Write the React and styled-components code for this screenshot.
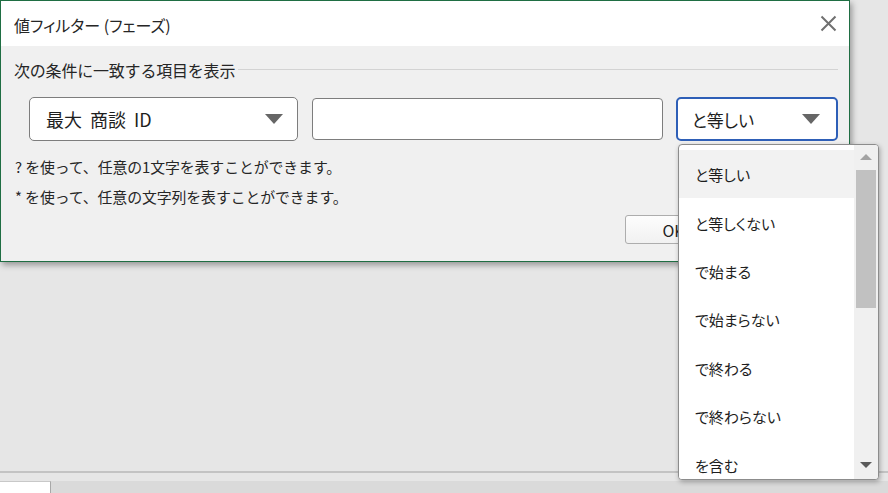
import React from 'react';
import styled, { createGlobalStyle } from 'styled-components';

const GlobalStyle = createGlobalStyle`
	html, body {
		margin: 0;
		padding: 0;
		background: #e6e6e6;
		font-family: 'Noto Sans CJK JP', 'Noto Sans', sans-serif;
		color: #222;
	}
`;

const Page = styled.div`
	position: relative;
	width: 888px;
	height: 493px;
	overflow: hidden;
	display: flex;
	flex-direction: column;
`;

const Workspace = styled.div`
	flex: 1;
	border-bottom: 2px solid #c3c3c3;
`;

const Spacer = styled.div`
	height: 8px;
	background: #e6e6e6;
`;

const TabBar = styled.div`
	height: 12px;
	background: #dadada;
	display: flex;
`;

const SheetTab = styled.div`
	width: 50px;
	background: #fff;
	border-right: 1px solid #a8a8a8;
	border-top: 1px solid #c8c8c8;
`;

const Dialog = styled.div`
	width: 848px;
	height: 260px;
	border: 1px solid #1f6e43;
	background: #f0f0f0;
	box-shadow: 2px 3px 6px rgba(0, 0, 0, 0.35);
	display: flex;
	flex-direction: column;
`;

const TitleBar = styled.div`
	height: 45px;
	background: #fff;
	display: flex;
	align-items: center;
	justify-content: space-between;
	padding: 0 12px 0 13px;
`;

const Title = styled.span`
	font-size: 16px;
	font-feature-settings: 'palt';
	color: #262626;
	padding-top: 2px;
`;

const CloseButton = styled.button`
	border: none;
	background: transparent;
	padding: 0;
	width: 18px;
	height: 18px;
	display: flex;
	align-items: center;
	justify-content: center;
`;

const Body = styled.div`
	flex: 1;
	padding: 12px 11px 0 13px;
	display: flex;
	flex-direction: column;
`;

const GroupHeader = styled.div`
	display: flex;
	align-items: center;
	gap: 3px;
	height: 24px;
`;

const GroupLabel = styled.span`
	font-size: 16px;
	color: #262626;
	white-space: nowrap;
	letter-spacing: -0.2px;
`;

const GroupLine = styled.div`
	flex: 1;
	height: 1px;
	background: #d3d3d3;
	margin-top: -1px;
`;

const ConditionRow = styled.div`
	display: flex;
	align-items: center;
	gap: 14px;
	margin: 15px 0 0 15px;
`;

const Select = styled.div`
	box-sizing: border-box;
	width: ${(p) => p.$width}px;
	height: 44px;
	background: #fff;
	border: ${(p) => (p.$focused ? '2px solid #2e5fb7' : '1px solid #7d7d7d')};
	border-radius: 5px;
	display: flex;
	align-items: center;
	justify-content: space-between;
	padding: ${(p) => (p.$focused ? '0 16px 0 14px' : '0 14px 0 16px')};
	font-size: ${(p) => p.$size}px;
	color: #1e1e1e;
	font-feature-settings: 'palt';
	word-spacing: ${(p) => p.$wordGap || 0}px;
`;

const Caret = styled.span`
	width: 0;
	height: 0;
	border-left: 9px solid transparent;
	border-right: 9px solid transparent;
	border-top: 10px solid #666;
`;

const TextInput = styled.div`
	box-sizing: border-box;
	width: 353px;
	height: 42px;
	background: #fff;
	border: 1px solid #7d7d7d;
	border-radius: 4px;
	margin-right: -1px;
`;

const Hints = styled.div`
	margin-top: 15px;
	display: flex;
	flex-direction: column;
	gap: 9px;
`;

const Hint = styled.div`
	font-size: 14.9px;
	line-height: 21px;
	color: #262626;
	padding-left: 1px;
	letter-spacing: -0.1px;
`;

const ButtonRow = styled.div`
	display: flex;
	justify-content: flex-end;
	margin-top: 8px;
	padding-right: 116px;
`;

const DialogButton = styled.button`
	width: ${(p) => p.$width}px;
	height: 29px;
	border: 1px solid #adadad;
	border-radius: 3px;
	background: linear-gradient(#fdfdfd, #f1f1f1);
	font-family: 'Noto Sans CJK JP', 'Noto Sans', sans-serif;
	font-size: 16px;
	color: #222;
	padding: 0;
`;

const Dropdown = styled.div`
	position: absolute;
	left: 678px;
	top: 144px;
	width: 201px;
	height: 336px;
	box-sizing: border-box;
	background: #fff;
	border: 1px solid #8c8c8c;
	border-radius: 4px;
	box-shadow: 1px 2px 5px rgba(0, 0, 0, 0.3);
	display: flex;
	overflow: hidden;
`;

const OptionList = styled.ul`
	flex: 1;
	list-style: none;
	margin: 0;
	padding: 5px 0 0;
`;

const Option = styled.li`
	height: 48.4px;
	display: flex;
	align-items: center;
	padding-left: 16px;
	padding-top: 1px;
	box-sizing: border-box;
	font-size: 15px;
	font-feature-settings: 'palt';
	color: #1e1e1e;
	background: ${(p) => (p.$active ? '#f2f2f2' : '#fff')};
`;

const Scrollbar = styled.div`
	width: 24px;
	background: #f0f0f0;
	display: flex;
	flex-direction: column;
	align-items: center;
`;

const ArrowUp = styled.span`
	margin-top: 9px;
	width: 0;
	height: 0;
	border-left: 6px solid transparent;
	border-right: 6px solid transparent;
	border-bottom: 6px solid #a3a3a3;
`;

const Thumb = styled.div`
	margin-top: 10px;
	width: 20px;
	height: 138px;
	background: #c1c1c1;
`;

const ArrowDown = styled.span`
	margin-top: auto;
	margin-bottom: 11px;
	width: 0;
	height: 0;
	border-left: 6px solid transparent;
	border-right: 6px solid transparent;
	border-top: 6px solid #5a5a5a;
`;

const options = [
	'と等しい',
	'と等しくない',
	'で始まる',
	'で始まらない',
	'で終わる',
	'で終わらない',
	'を含む',
];

export default function App() {
	return (
		<>
			<GlobalStyle />
			<Page>
				<Workspace>
					<Dialog>
						<TitleBar>
							<Title>値フィルター (フェーズ)</Title>
							<CloseButton aria-label='閉じる'>
								<svg width='17' height='17' viewBox='0 0 17 17'>
									<path d='M1.5 1.5 L15.5 15.5 M15.5 1.5 L1.5 15.5' stroke='#707070' strokeWidth='2' />
								</svg>
							</CloseButton>
						</TitleBar>
						<Body>
							<GroupHeader>
								<GroupLabel>次の条件に一致する項目を表示</GroupLabel>
								<GroupLine />
							</GroupHeader>
							<ConditionRow>
								<Select $width={270} $size={18} $wordGap={4}>
									<span>最大 商談 ID</span>
									<Caret />
								</Select>
								<TextInput />
								<Select $width={163} $size={17} $focused>
									<span>と等しい</span>
									<Caret />
								</Select>
							</ConditionRow>
							<Hints>
								<Hint>? を使って、任意の1文字を表すことができます。</Hint>
								<Hint>* を使って、任意の文字列を表すことができます。</Hint>
							</Hints>
							<ButtonRow>
								<DialogButton $width={97}>OK</DialogButton>
							</ButtonRow>
						</Body>
					</Dialog>
				</Workspace>
				<Spacer />
				<TabBar>
					<SheetTab />
				</TabBar>
				<Dropdown>
					<OptionList>
						{options.map((o, i) => (
							<Option key={o} $active={i === 0}>
								{o}
							</Option>
						))}
					</OptionList>
					<Scrollbar>
						<ArrowUp />
						<Thumb />
						<ArrowDown />
					</Scrollbar>
				</Dropdown>
			</Page>
		</>
	);
}
